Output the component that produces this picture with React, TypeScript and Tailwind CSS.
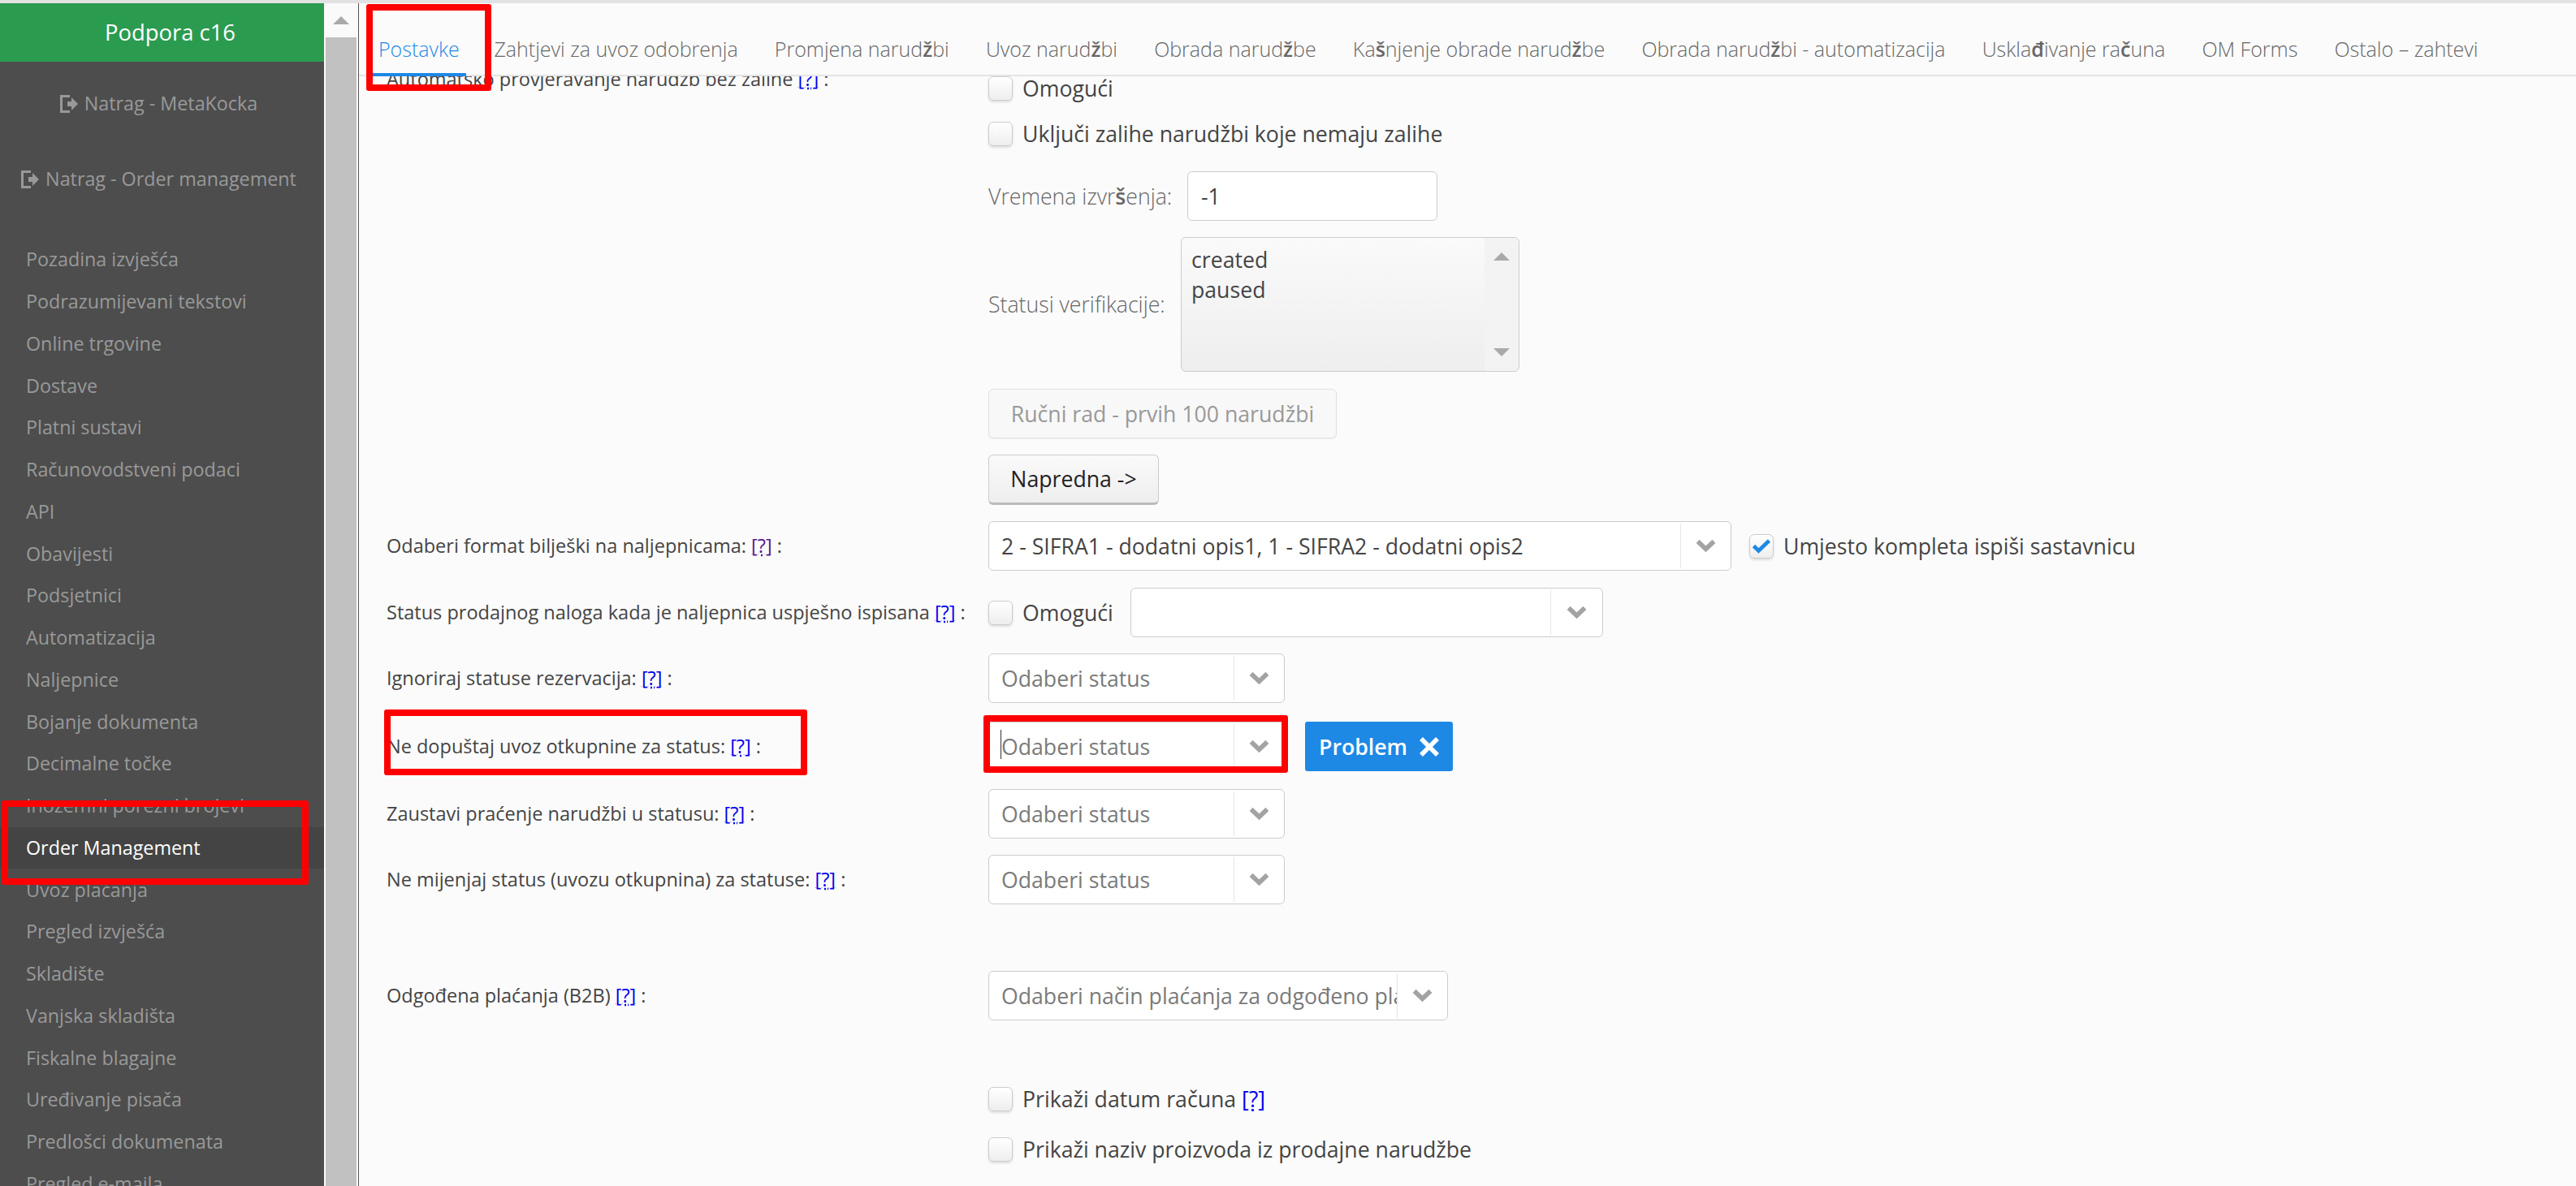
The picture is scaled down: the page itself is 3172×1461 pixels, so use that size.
import type { ReactNode } from "react";

const menuItems = [
  "Pozadina izvješća",
  "Podrazumijevani tekstovi",
  "Online trgovine",
  "Dostave",
  "Platni sustavi",
  "Računovodstveni podaci",
  "API",
  "Obavijesti",
  "Podsjetnici",
  "Automatizacija",
  "Naljepnice",
  "Bojanje dokumenta",
  "Decimalne točke",
  "Inozemni porezni brojevi",
  "Order Management",
  "Uvoz plaćanja",
  "Pregled izvješća",
  "Skladište",
  "Vanjska skladišta",
  "Fiskalne blagajne",
  "Uređivanje pisača",
  "Predlošci dokumenata",
  "Pregled e-maila",
];

const Heavy = ({ children }: { children: ReactNode }) => <span className="font-semibold">{children}</span>;

const tabs: ReactNode[] = [
  "Postavke",
  "Zahtjevi za uvoz odobrenja",
  <>Promjena narud<Heavy>ž</Heavy>bi</>,
  <>Uvoz narud<Heavy>ž</Heavy>bi</>,
  <>Obrada narud<Heavy>ž</Heavy>be</>,
  <>Ka<Heavy>š</Heavy>njenje obrade narud<Heavy>ž</Heavy>be</>,
  <>Obrada narud<Heavy>ž</Heavy>bi - automatizacija</>,
  <>Uskla<Heavy>đ</Heavy>ivanje ra<Heavy>č</Heavy>una</>,
  "OM Forms",
  "Ostalo – zahtevi",
];

function LogOutIcon() {
  return (
    <svg viewBox="0 0 24 24" className="mr-[8px] h-[24px] w-[24px] fill-[#999]">
      <path d="M2 1h12v3H5v16h9v3H2z" />
      <path d="M11 9h5V4l8 8-8 8v-5h-5z" />
    </svg>
  );
}

function Chevron() {
  return (
    <svg viewBox="0 0 26 18" className="h-[17px] w-[25px] fill-none stroke-[#a3a3a3] stroke-[6]">
      <path d="M2.5 3l10.5 10L23.5 3" />
    </svg>
  );
}

function Help() {
  return <a className="text-[#0000ee] underline decoration-dotted">[?]</a>;
}

function Checkbox({ checked }: { checked?: boolean }) {
  return (
    <span className="flex h-[30px] w-[30px] shrink-0 items-center justify-center rounded-[6px] border border-[#ccc] bg-gradient-to-b from-white to-[#eee] shadow-[0_2px_3px_rgba(0,0,0,0.12)]">
      {checked && (
        <svg viewBox="0 0 20 16" className="h-[19px] w-[24px] shrink-0 fill-none stroke-[#1e88e5] stroke-[4]">
          <path d="M2 8l5 5L18 2.5" />
        </svg>
      )}
    </span>
  );
}

function Select({ width, arrow = 62, text, muted = true }: { width: string; arrow?: number; text?: string; muted?: boolean }) {
  return (
    <div className={`flex h-[61px] shrink-0 items-stretch rounded-[6px] border border-[#ccc] bg-white ${width}`}>
      <div className={`min-w-0 flex-1 overflow-hidden whitespace-nowrap pl-[15px] leading-[59px] ${muted ? "text-[#7a7a7a]" : "text-[#444]"}`}>
        {text}
      </div>
      <div className="my-[2px] flex shrink-0 items-center justify-center border-l border-[#e6e6e6]" style={{ width: arrow }}>
        <Chevron />
      </div>
    </div>
  );
}

function Row({ label, children, className }: { label: ReactNode; children: ReactNode; className: string }) {
  return (
    <div className={`flex h-[61px] items-center ${className}`}>
      <div className="w-[741px] shrink-0 whitespace-nowrap text-[23.5px] text-[#444]">{label}</div>
      {children}
    </div>
  );
}

function CheckRow({ className = "", children, checked }: { className?: string; children: ReactNode; checked?: boolean }) {
  return (
    <div className={`flex h-[30px] items-center gap-[12px] whitespace-nowrap ${className}`}>
      <Checkbox checked={checked} />
      <span>{children}</span>
    </div>
  );
}

function Sidebar() {
  return (
    <aside className="h-full w-[399px] shrink-0 overflow-hidden bg-[#4d4d4d] text-[23.3px]">
      <div className="flex h-[72px] items-center justify-center pl-[20px] text-[27.4px] text-white bg-[#2b9b50]">Podpora c16</div>
      <div className="mt-[5px] flex h-[93px] items-center justify-center pr-[10px] text-[#999]">
        <LogOutIcon />
        Natrag - MetaKocka
      </div>
      <div className="flex h-[93px] items-center justify-center pr-[10px] text-[#999]">
        <LogOutIcon />
        Natrag - Order management
      </div>
      <ul className="mt-[27px]">
        {menuItems.map((item) => (
          <li
            key={item}
            className={`flex h-[51.75px] items-center pl-[32px] ${
              item === "Order Management" ? "bg-[#444] font-medium text-white" : "text-[#999]"
            }`}
          >
            {item}
          </li>
        ))}
      </ul>
    </aside>
  );
}

function Tabs() {
  return (
    <nav className="relative z-10 flex h-[90px] items-end border-b-2 border-[#e4e4e4] bg-[#fbfbfb] pl-[16px] text-[25px] font-light text-[#666]">
      {tabs.map((tab, i) =>
        i === 0 ? (
          <div key={i} className="-mb-[2px] mr-[12px] h-[52px] whitespace-nowrap border-b-[4px] border-[#1e88e5] px-[8px] text-[#1e88e5]">
            {tab}
          </div>
        ) : (
          <div key={i} className="h-[50px] whitespace-nowrap px-[22.6px]">
            {tab}
          </div>
        )
      )}
    </nav>
  );
}

function Form() {
  return (
    <div className="-mt-[20px] pl-[34px] text-[26.67px]">
      <div className="flex">
        <div className="flex h-[48px] w-[741px] shrink-0 items-center whitespace-nowrap text-[23.5px] text-[#444]">
          <span>
            Automatsko provjeravanje narudžb bez zalihe <Help /> :
          </span>
        </div>
        <div className="pt-[20px] text-[#444]">
          <CheckRow>Omogući</CheckRow>
          <CheckRow className="mt-[26px]">Uključi zalihe narudžbi koje nemaju zalihe</CheckRow>
          <div className="mt-[31px] flex items-center font-light text-[#666]">
            <div className="w-[245px]">
              Vremena izvr<Heavy>š</Heavy>enja:
            </div>
            <div className="flex h-[61px] w-[308px] items-center rounded-[6px] border border-[#ccc] bg-white pl-[16px] font-normal text-[#444]">-1</div>
          </div>
          <div className="mt-[20px] flex items-center font-light text-[#666]">
            <div className="w-[237px]">Statusi verifikacije:</div>
            <div className="relative h-[166px] w-[417px] rounded-[6px] border border-[#ccc] bg-gradient-to-b from-[#fafafa] to-[#eee] pl-[12px] pt-[8px] font-normal leading-[37px] text-[#444]">
              <div>created</div>
              <div>paused</div>
              <div className="absolute inset-y-0 right-0 flex w-[42px] flex-col items-center justify-between rounded-r-[6px] bg-[#f3f3f3] py-[18px]">
                <span className="h-0 w-0 border-x-[10px] border-b-[10px] border-x-transparent border-b-[#aaa]" />
                <span className="h-0 w-0 border-x-[10px] border-t-[10px] border-x-transparent border-t-[#aaa]" />
              </div>
            </div>
          </div>
          <div className="mt-[21px] flex h-[61px] w-[429px] items-center justify-center rounded-[6px] border border-[#e2e2e2] bg-[#f8f8f8] text-[#999] shadow-[0_1px_2px_rgba(0,0,0,0.06)]">
            Ručni rad - prvih 100 narudžbi
          </div>
          <div className="mt-[20px] flex h-[62px] w-[210px] items-center justify-center rounded-[6px] border border-[#ccc] border-b-[3px] border-b-[#bbb] bg-gradient-to-b from-[#fafafa] to-[#eee] text-[#222]">
            Napredna -&gt;
          </div>
        </div>
      </div>

      <Row className="mt-[20px]" label={<>Odaberi format bilješki na naljepnicama: <a className="text-[#551a8b] underline decoration-dotted">[?]</a> :</>}>
        <Select width="w-[915px]" text="2 - SIFRA1 - dodatni opis1, 1 - SIFRA2 - dodatni opis2" muted={false} />
        <CheckRow className="ml-[22px] text-[#444]" checked>
          Umjesto kompleta ispiši sastavnicu
        </CheckRow>
      </Row>
      <Row className="mt-[21px]" label={<>Status prodajnog naloga kada je naljepnica uspješno ispisana <Help /> :</>}>
        <Checkbox />
        <span className="ml-[12px] w-[133px] text-[#444]">Omogući</span>
        <Select width="w-[582px]" arrow={64} />
      </Row>
      <Row className="mt-[20px]" label={<>Ignoriraj statuse rezervacija: <Help /> :</>}>
        <Select width="w-[365px]" text="Odaberi status" />
      </Row>
      <Row className="mt-[23px]" label={<>Ne dopuštaj uvoz otkupnine za status: <Help /> :</>}>
        <div className="relative">
          <Select width="w-[365px]" text="Odaberi status" />
          <span className="absolute left-[15px] top-[10px] h-[36px] w-px bg-[#333]" />
        </div>
        <div className="ml-[25px] flex h-[61px] w-[182px] items-center justify-center gap-[15px] rounded-[3px] bg-[#1e88e5] font-semibold text-white">
          Problem
          <svg viewBox="0 0 24 24" className="h-[24px] w-[24px] fill-none stroke-white stroke-[5.5]">
            <path d="M2 2l20 20M22 2L2 22" />
          </svg>
        </div>
      </Row>
      <Row className="mt-[22px]" label={<>Zaustavi praćenje narudžbi u statusu: <Help /> :</>}>
        <Select width="w-[365px]" text="Odaberi status" />
      </Row>
      <Row className="mt-[20px]" label={<>Ne mijenjaj status (uvozu otkupnina) za statuse: <Help /> :</>}>
        <Select width="w-[365px]" text="Odaberi status" />
      </Row>
      <Row className="mt-[82px]" label={<>Odgođena plaćanja (B2B) <Help /> :</>}>
        <Select width="w-[566px]" text="Odaberi način plaćanja za odgođeno plaćanje" />
      </Row>
      <div className="ml-[741px] mt-[82px] text-[#444]">
        <CheckRow>
          Prikaži datum računa <Help />
        </CheckRow>
        <CheckRow className="mt-[32px]">Prikaži naziv proizvoda iz prodajne narudžbe</CheckRow>
      </div>
    </div>
  );
}

// annotation rectangles drawn over the screenshot
function RedBox({ className }: { className: string }) {
  return <div className={`pointer-events-none absolute z-20 rounded-[3px] border-[8px] border-[#ff0000] ${className}`} />;
}

export default function App() {
  return (
    <div className="relative h-[1461px] w-[3172px] overflow-hidden bg-[#fbfbfb] pt-[4px] font-['Open_Sans',sans-serif] text-[25px]">
      <div className="absolute inset-x-0 top-0 h-[4px] bg-[#e2e2e2]" />
      <div className="flex h-full">
        <Sidebar />
        <div className="flex h-full w-[43px] shrink-0 flex-col border-r border-[#555] bg-[#fafafa]">
          <div className="flex h-[42px] items-center justify-center">
            <span className="h-0 w-0 border-x-[10px] border-b-[10px] border-x-transparent border-b-[#aaa]" />
          </div>
          <div className="ml-[2px] w-[38px] flex-1 bg-[#c1c1c1]" />
        </div>
        <main className="min-w-0 flex-1">
          <Tabs />
          <Form />
        </main>
      </div>
      <RedBox className="left-[451px] top-[5px] h-[107px] w-[154px]" />
      <RedBox className="left-[2px] top-[986px] h-[104px] w-[378px]" />
      <RedBox className="left-[473px] top-[874px] h-[81px] w-[521px]" />
      <RedBox className="left-[1211px] top-[881px] h-[71px] w-[375px]" />
    </div>
  );
}
